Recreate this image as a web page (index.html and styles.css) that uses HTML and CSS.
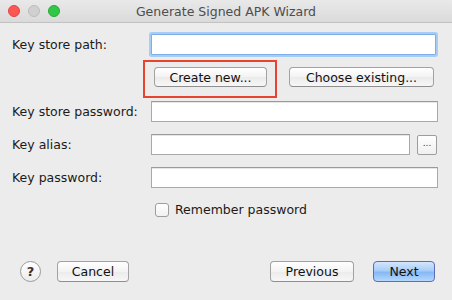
FILE: index.html
```html
<!DOCTYPE html>
<html lang="en">
<head>
  <meta charset="UTF-8" />
  <title>Generate Signed APK Wizard</title>
  <link rel="stylesheet" href="styles.css">
</head>
<body>
  <div class="window">
    <!-- Title bar -->
    <div class="titlebar">
      <div class="lights">
        <span class="light red"></span>
        <span class="light gray"></span>
        <span class="light green"></span>
      </div>
      <div class="title">Generate Signed APK Wizard</div>
    </div>

    <!-- Form -->
    <div class="form">
      <div class="row row-path">
        <label class="label" for="storePath">Key store path:</label>
        <input class="field focused" type="text" id="storePath" />
      </div>

      <div class="row row-actions">
        <div class="label"></div>
        <div class="actions">
          <div class="highlight">
            <button class="btn btn-create">Create new...</button>
          </div>
          <button class="btn btn-choose">Choose existing...</button>
        </div>
      </div>

      <div class="row row-field">
        <label class="label" for="storePass">Key store password:</label>
        <input class="field" type="password" id="storePass" />
      </div>

      <div class="row row-field">
        <label class="label" for="alias">Key alias:</label>
        <div class="alias-wrap">
          <input class="field" type="text" id="alias" />
          <button class="btn-dots">...</button>
        </div>
      </div>

      <div class="row row-field">
        <label class="label" for="keyPass">Key password:</label>
        <input class="field" type="password" id="keyPass" />
      </div>

      <div class="row row-check">
        <div class="label"></div>
        <label class="check">
          <span class="box"></span>
          Remember password
        </label>
      </div>
    </div>

    <!-- Footer buttons -->
    <div class="footer">
      <div class="help">?</div>
      <button class="btn btn-cancel">Cancel</button>
      <div class="spacer"></div>
      <button class="btn btn-prev">Previous</button>
      <button class="btn btn-next">Next</button>
    </div>
  </div>
</body>
</html>
```

FILE: styles.css
```css
body {
  margin: 0;
  padding: 0;
  background-color: #ececec;
  font-family: 'DejaVu Sans', 'Liberation Sans', sans-serif;
  font-size: 12.5px;
  color: #1a1a1a;
}

.window {
  width: 452px;
  height: 300px;
  display: flex;
  flex-direction: column;
  background-color: #ececec;
  overflow: hidden;
}

.titlebar {
  height: 22px;
  position: relative;
  display: flex;
  align-items: center;
  justify-content: center;
  background: linear-gradient(#e9e9e9, #dadada);
  border-bottom: 1px solid #c2c2c2;
  box-sizing: content-box;
}

.lights {
  position: absolute;
  left: 8px;
  top: 5px;
  display: flex;
  gap: 8px;
}

.light {
  width: 12px;
  height: 12px;
  border-radius: 50%;
  box-sizing: border-box;
}

.light.red {
  background-color: #fc5753;
  border: 1px solid #df4744;
}

.light.gray {
  background-color: #d0d0d0;
  border: 1px solid #bdbdbd;
}

.light.green {
  background-color: #33c748;
  border: 1px solid #27aa35;
}

.title {
  font-size: 12.5px;
  color: #4d4d4d;
  padding-top: 1px;
}

.form {
  padding: 11px 14px 0 12px;
}

.row {
  display: flex;
  align-items: center;
}

.label {
  width: 139px;
  flex-shrink: 0;
}

.field {
  flex: 1;
  height: 21px;
  margin: 0;
  border: 1px solid #a9a9a9;
  border-top-color: #9a9a9a;
  background-color: #fff;
  box-shadow: inset 0 1px 0 #e6e6e6;
  box-sizing: border-box;
  padding: 0 4px;
  font: inherit;
  outline: none;
}

.field.focused {
  border-color: #7eaee6;
  box-shadow: 0 0 0 2px #a8cdf4;
  border-radius: 1px;
  margin-right: 2px;
}

.row-actions {
  margin-top: 5px;
}

.actions {
  display: flex;
  align-items: flex-start;
  margin-left: -8px;
}

.highlight {
  border: 2px solid #e8432f;
  padding: 5px 8px 9px 9px;
  margin-right: 12px;
}

.btn {
  height: 20px;
  margin: 0;
  padding: 0;
  border: 1px solid #a2a2a2;
  border-bottom-color: #8f8f8f;
  border-radius: 4px;
  background: linear-gradient(#ffffff, #f3f3f3 50%, #ebebeb 51%, #f7f7f7);
  font-family: inherit;
  font-size: 12.5px;
  color: #111;
  box-sizing: border-box;
  display: block;
}

.btn-create {
  width: 113px;
}

.btn-choose {
  width: 145px;
  margin-top: 7px;
}

.row-field {
  margin-top: 3px;
}

.row-field + .row-field {
  margin-top: 12px;
}

.alias-wrap {
  flex: 1;
  display: flex;
  align-items: center;
  gap: 7px;
}

.btn-dots {
  width: 20px;
  height: 20px;
  margin: 0 1px 0 0;
  padding: 0 0 4px;
  border: 1px solid #9d9d9d;
  border-radius: 2px;
  background: linear-gradient(#ffffff, #f0f0f0);
  font-family: inherit;
  font-size: 9px;
  color: #333;
  box-sizing: border-box;
}

.row-check {
  margin-top: 14px;
}

.check {
  display: flex;
  align-items: center;
  gap: 6px;
  margin-left: 4px;
}

.box {
  width: 14px;
  height: 14px;
  border: 1px solid #9e9e9e;
  border-radius: 3px;
  background: linear-gradient(#ffffff, #f1f1f1);
  box-sizing: border-box;
}

.footer {
  margin-top: auto;
  display: flex;
  align-items: center;
  padding: 0 17px 18px 20px;
}

.help {
  width: 21px;
  height: 21px;
  border: 1px solid #9a9a9a;
  border-radius: 50%;
  background: linear-gradient(#ffffff, #ececec);
  box-sizing: border-box;
  display: flex;
  align-items: center;
  justify-content: center;
  font-weight: bold;
  font-size: 13px;
  color: #333;
}

.btn-cancel {
  width: 72px;
  height: 21px;
  margin-left: 16px;
}

.spacer {
  flex: 1;
}

.btn-prev {
  width: 84px;
  height: 21px;
}

.btn-next {
  width: 62px;
  height: 21px;
  margin-left: 19px;
  border-color: #5f6bb5;
  background: linear-gradient(#d4e6fc, #a7cdf8 45%, #86b8f3 55%, #b5d8fd);
}
```
